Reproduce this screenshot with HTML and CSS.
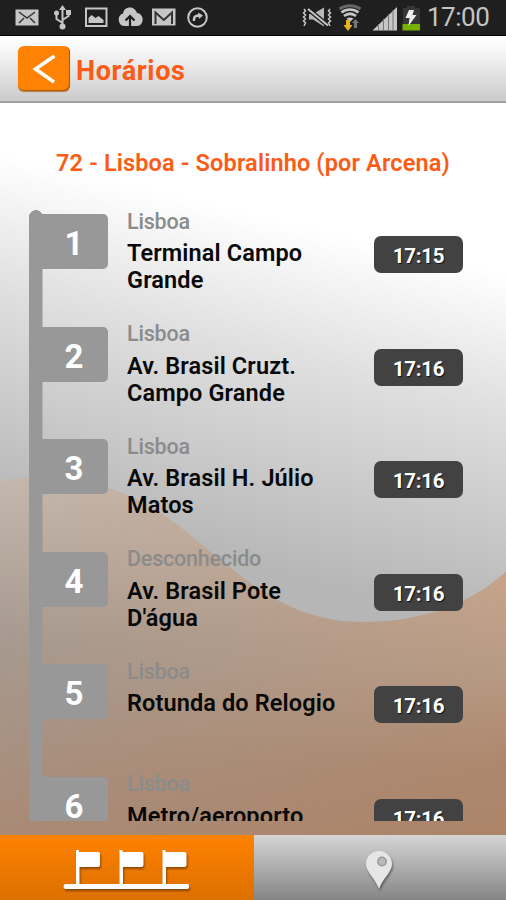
FILE: index.html
```html
<!DOCTYPE html>
<html lang="pt">
<head>
<meta charset="utf-8">
<title>Horários</title>
<link rel="stylesheet" href="styles.css">
</head>
<body>
<div class="app">
  <div class="status">
    <svg class="status-icons" width="300" height="35" viewBox="0 0 300 35" fill="none" stroke="#c6c6c6" stroke-width="2">
      <path d="M15.500 9.500h23v16h-23z" fill="#c6c6c6" stroke="none"/>
      <path d="M19 12l8 6 8-6M19 23l5-5M35 23l-5-5" stroke="#333" stroke-width="1.500"/>
      <path d="M62.500 9v17M62.500 23l-6-4v-5M62.500 20l6-4v-4"/>
      <path d="M62.500 5l3.500 5h-7z" fill="#c6c6c6" stroke="none"/>
      <path d="M66 10h5v5h-5z" fill="#c6c6c6" stroke="none"/>
      <circle cx="56.500" cy="13" r="2.500" fill="#c6c6c6" stroke="none"/>
      <circle cx="62.500" cy="26.500" r="3" fill="#c6c6c6" stroke="none"/>
      <path d="M86 8.500h20.500v17.500H86z"/>
      <path d="M88.500 23v-5l3-3 4 3 3-2 5 4v3z" fill="#c6c6c6" stroke="none"/>
      <path d="M124 26a6.500 6.500 0 0 1-1-12.500C124 5.500 135 5.500 137 13c8 1 7 13 0 13z" fill="#c6c6c6" stroke="none"/>
      <path d="M130 27V17M125.500 20.500l4.500-4.500 4.500 4.500" stroke="#1f1f1f" stroke-width="2.200"/>
      <path d="M152 8.500h23.500v17H152z" fill="#c6c6c6" stroke="none"/>
      <path d="M155.500 24V12.500l8.300 7.500 8.200-7.500V24" stroke="#333" stroke-width="2"/>
      <circle cx="197.500" cy="17.500" r="9.300"/>
      <path d="M194 21v-2c0-3 2-3.500 5.500-3.500" stroke-width="2.500"/>
      <path d="M198 12.500l5 3-4 3.500z" fill="#c6c6c6" stroke="none"/>
    </svg>
    <div class="status-right">
      <svg width="120" height="35" viewBox="300 0 120 35" fill="none" stroke="#c6c6c6" stroke-width="2">
        <path d="M309 14h4l11-6.500v19l-11-7h-4z" fill="#b8b8b8" stroke="none"/>
        <path d="M308 9l20 16.500" stroke="#1f1f1f" stroke-width="4.500"/>
        <path d="M308 9l20 16.500"/>
        <path d="M304 9l1.500 2-2 2 2 2-2 2 2 2-2 2 2 2-1.500 3M330 9l-1.500 2 2 2-2 2 2 2-2 2 2 2-2 2 1.500 3" stroke-width="1.500"/>
        <path d="M339.500 9c6-4.500 15-4.500 21 0" stroke="#666" stroke-width="3"/>
        <path d="M341.500 12.500c5-4 12-4 17 0M344 16c4-3 8-3 12 0" stroke-width="2.700"/>
        <path d="M346.500 18.500q3.500-2 7 0L350 22z" fill="#c6c6c6" stroke="none"/>
        <path d="M346 20h4v5h2.500l-4.500 6-4.500-6h2.500z" fill="#e8b420" stroke="none"/>
        <path d="M354 28v-5h-2l3.500-4 3.500 4h-2v5z" fill="#777" stroke="none"/>
        <path d="M372.500 30.500L397 7v23.500z" fill="#c6c6c6" stroke="none"/>
        <path d="M378.500 24v7M383.500 19v12M388.500 14v17M393 10v21" stroke="#777" stroke-width="1"/>
        <path d="M407 6h8v2h5v22h-17V8h4z" fill="#363636" stroke="none"/>
        <path d="M402.500 24h17.500v6.500h-17.500z" fill="#78b000" stroke="none"/>
        <path d="M409 10h5l-1.500 5h4l-8 11 1-8h-4z" fill="#eee" stroke="none"/>
      </svg>
      <span class="clock">17:00</span>
    </div>
  </div>
  <header class="header">
    <div class="back">
      <svg width="52" height="45" viewBox="0 0 52 45" fill="none" stroke="#fff" stroke-width="3.600"><path d="M36.500 10L17.500 23l18.500 13"/></svg>
    </div>
    <h1>Horários</h1>
  </header>
  <main class="content">
    <svg class="backdrop" width="506" height="732" viewBox="0 103 506 732">
      <defs>
        <linearGradient id="grey" gradientUnits="userSpaceOnUse" x1="175" y1="195" x2="95" y2="530">
          <stop offset="0" stop-color="#fff"/><stop offset=".4" stop-color="#dedede"/><stop offset="1" stop-color="#b6b6b6"/>
        </linearGradient>
        <linearGradient id="sand" gradientUnits="userSpaceOnUse" x1="0" y1="480" x2="0" y2="835">
          <stop offset="0" stop-color="#c4b8ae"/><stop offset=".45" stop-color="#a79a90"/><stop offset="1" stop-color="#a98a76"/>
        </linearGradient>
        <linearGradient id="sandRight" gradientUnits="userSpaceOnUse" x1="0" y1="560" x2="0" y2="835">
          <stop offset="0" stop-color="#c8a58d"/><stop offset=".4" stop-color="#b89a83"/><stop offset=".75" stop-color="#ad876d"/><stop offset="1" stop-color="#ac8468"/>
        </linearGradient>
        <linearGradient id="fade"><stop offset="0" stop-color="#000"/><stop offset="1" stop-color="#fff"/></linearGradient>
        <mask id="side"><path d="M0 103h506v732H0z" fill="url(#fade)"/></mask>
      </defs>
      <path d="M0 103h506v732H0z" fill="url(#grey)"/>
      <path d="M0 482C12 477 26 476 45 478C120 481 158 508 200 543C260 594 300 622 363 622C424 622 470 604 506 572V835H0z" fill="url(#sand)"/>
      <path d="M0 482C12 477 26 476 45 478C120 481 158 508 200 543C260 594 300 622 363 622C424 622 470 604 506 572V835H0z" fill="url(#sandRight)" mask="url(#side)"/>
    </svg>
    <h2>72 - Lisboa - Sobralinho (por Arcena)</h2>
    <div class="list">
      <div class="stop first"><div class="rail"><div class="flag">1</div></div><div class="info"><div class="city">Lisboa</div><div class="name">Terminal Campo<br>Grande</div></div><div class="time">17:15</div></div>
      <div class="stop"><div class="rail"><div class="flag">2</div></div><div class="info"><div class="city">Lisboa</div><div class="name">Av. Brasil Cruzt.<br>Campo Grande</div></div><div class="time">17:16</div></div>
      <div class="stop"><div class="rail"><div class="flag">3</div></div><div class="info"><div class="city">Lisboa</div><div class="name">Av. Brasil H. Júlio<br>Matos</div></div><div class="time">17:16</div></div>
      <div class="stop"><div class="rail"><div class="flag">4</div></div><div class="info"><div class="city">Desconhecido</div><div class="name">Av. Brasil Pote<br>D'água</div></div><div class="time">17:16</div></div>
      <div class="stop"><div class="rail"><div class="flag">5</div></div><div class="info"><div class="city">Lisboa</div><div class="name">Rotunda do Relogio</div></div><div class="time">17:16</div></div>
      <div class="stop"><div class="rail"><div class="flag">6</div></div><div class="info"><div class="city">Lisboa</div><div class="name">Metro/aeroporto</div></div><div class="time">17:16</div></div>
    </div>
  </main>
  <nav class="tabs">
    <div class="tab active">
      <svg width="128" height="44" viewBox="0 0 128 44" fill="#fff">
        <path d="M2 34h11V0h3v2h19q2 0 2 2v11q0 2-2 2H16.500v17h40V0h3v2h19q2 0 2 2v11q0 2-2 2H60v17h39.500V0h3v2h19q2 0 2 2v11q0 2-2 2H103v17h22q2.500 2.500 0 5H2q-3-2.500 0-5z"/>
      </svg>
    </div>
    <div class="tab">
      <svg class="pin" width="30" height="40" viewBox="0 0 30 40">
        <path d="M14 38C10 27 1 21 1 13a13 13 0 0 1 26 0c0 8-9 14-13 25z" fill="#e6e6e6"/>
        <circle cx="17" cy="10.500" r="4.200" fill="#b8b8b8" stroke="#999" stroke-width="1.500"/>
      </svg>
    </div>
  </nav>
</div>
</body>
</html>
```
FILE: styles.css
```css
* { box-sizing: border-box; }
body { margin: 0; font-family: Roboto, "Liberation Sans", sans-serif; }
.app { width: 506px; height: 900px; display: flex; flex-direction: column; overflow: hidden; }
.status { height: 36px; flex: none; background: #1f1f1f; border-bottom: 1px solid #000; display: flex; justify-content: space-between; }
.status-right { display: flex; width: 206px; }
.clock { margin-left: 7px; line-height: 35px; font-size: 26px; color: #c4c4c4; white-space: nowrap; letter-spacing: -0.5px; }
.header { height: 67px; flex: none; display: flex; align-items: center; padding-left: 18px; background: linear-gradient(#fff, #f8f8f8 20%, #cbcbcb); border-bottom: 2px solid #a2a2a2; }
.back { width: 52px; height: 45px; border-radius: 6px; background: #ff8204; box-shadow: inset -1px -1px 1px #a85b13, 0 1px 1px #b87b45; }
.back svg { display: block; }
h1 { margin: 5px 0 0 6px; font-size: 27px; line-height: 32px; font-weight: 700; letter-spacing: 0.65px; color: #fb5b14; }
.content { position: relative; height: 732px; flex: none; padding-top: 44px; }
.backdrop { position: absolute; top: 0; left: 0; z-index: -1; }
h2 { margin: 0; text-align: center; font-size: 23.500px; line-height: 32px; font-weight: 600; letter-spacing: 0.15px; color: #fb5b14; white-space: nowrap; }
.list { height: 617px; margin-top: 25px; padding-top: 6px; overflow: hidden; }
.stop { height: 112.5px; display: flex; padding-left: 29px; }
.rail { width: 79px; padding-top: 4px; background: linear-gradient(#989898, #989898) 0 0 / 13.500px 100% no-repeat; }
.first .rail { border-top-left-radius: 7px; background-image: radial-gradient(circle at 6.750px 6.750px, #989898 6.500px, transparent 7px), linear-gradient(#989898, #989898); background-size: 13.500px 13.500px, 13.500px 100%; background-position: 0 0, 0 7px; }
.flag { height: 55px; padding-left: 11px; border-radius: 2px 5px 5px 2px; background: #989898; color: #fff; text-align: center; font-size: 33px; line-height: 60px; font-weight: 700; }
.info { margin-left: 19px; width: 247px; white-space: nowrap; }
.city { margin-top: -1.500px; font-size: 21.500px; line-height: 26px; font-weight: 500; letter-spacing: -0.2px; color: #8b8b8b; }
.name { margin-top: 5.500px; font-size: 23.500px; line-height: 27px; font-weight: 600; letter-spacing: 0.12px; color: #080808; }
.time { width: 89px; height: 37px; margin-top: 26px; border-radius: 7px; background: #424242; color: #fff; text-align: center; font-size: 20.500px; line-height: 40px; font-weight: 700; letter-spacing: -0.3px; text-shadow: 1px 1px 1px #111; }
.tabs { height: 65px; flex: none; display: flex; }
.tab { flex: 1; display: flex; justify-content: center; padding-top: 16px; background: linear-gradient(#d5d5d5, #858585); }
.tab.active { flex: none; width: 254px; padding-top: 15px; background: linear-gradient(#ff8200, #dc7000); }
.tab svg { filter: drop-shadow(1px 2px 1px rgba(0,0,0,.4)); }
```
